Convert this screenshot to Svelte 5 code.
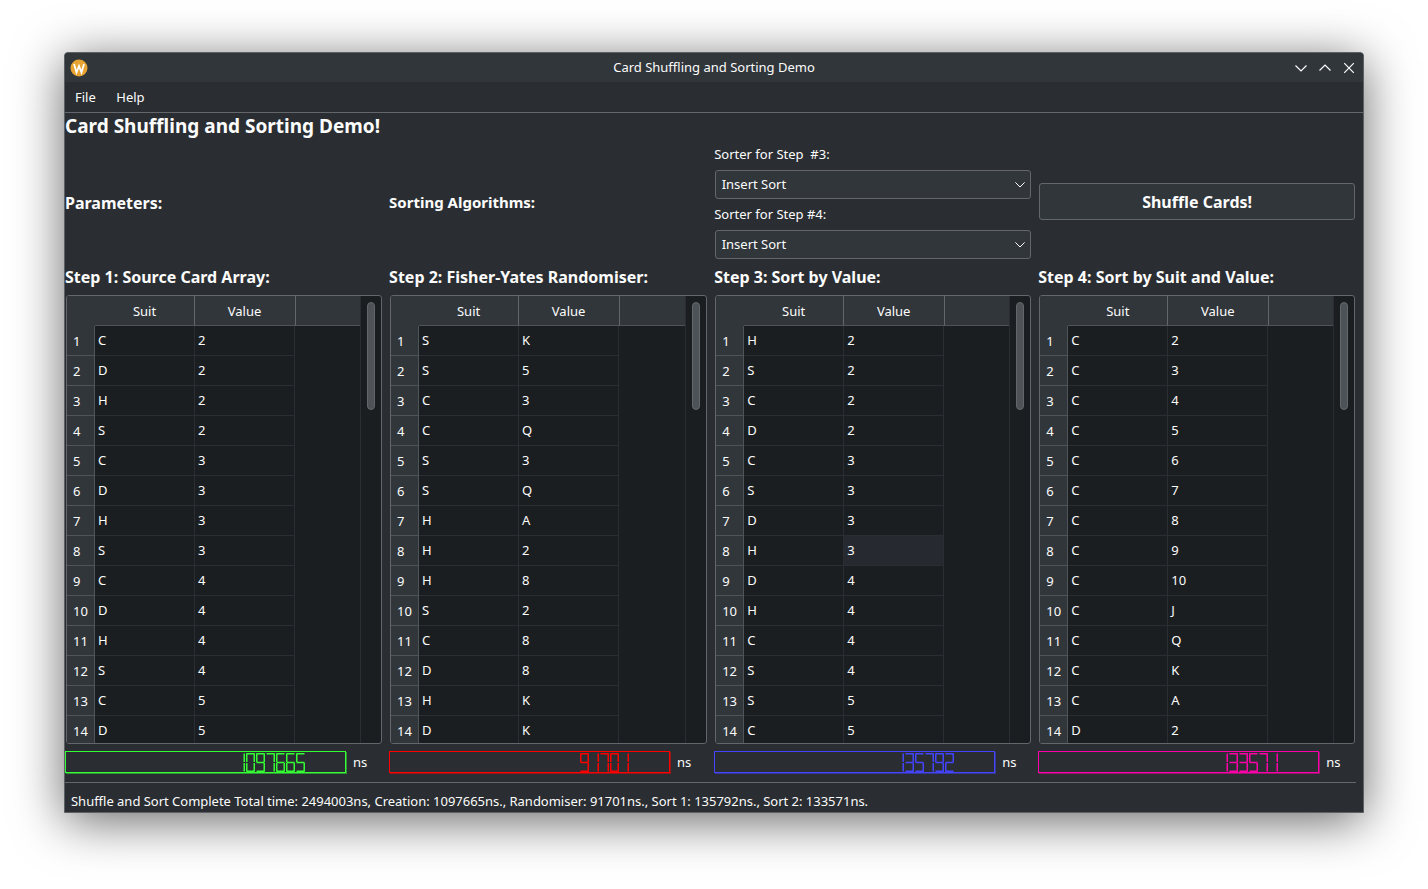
<script>
  const seg = { 0:'abcdef',1:'bc',2:'abged',3:'abgcd',4:'fgbc',5:'afgcd',6:'afgedc',7:'abc',8:'abcdefg',9:'abcdfg' };
  const W = 9, H = 19, T = 1.5, P = 10;
  const rects = {
    a:[0.5,0,W-1,T], g:[0.5,(H-T)/2,W-1,T], d:[0.5,H-T,W-1,T],
    f:[0,0.5,T,H/2-1], e:[0,H/2+0.5,T,H/2-1],
    b:[W-T,0.5,T,H/2-1], c:[W-T,H/2+0.5,T,H/2-1]
  };
  const rows = (s, v) => s.split(' ').map((x, i) => [x, v.split(' ')[i]]);
  const tables = [
    { title:'Step 1: Source Card Array:', rows: rows('C D H S C D H S C D H S C D','2 2 2 2 3 3 3 3 4 4 4 4 5 5'), lcd:'1097665', cls:'green', hover:-1 },
    { title:'Step 2: Fisher-Yates Randomiser:', rows: rows('S S C C S S H H H S C D H D','K 5 3 Q 3 Q A 2 8 2 8 8 K K'), lcd:'91701', cls:'red', hover:-1 },
    { title:'Step 3: Sort by Value:', rows: rows('H S C D C S D H D H C S S C','2 2 2 2 3 3 3 3 4 4 4 4 5 5'), lcd:'135792', cls:'blue', hover:7 },
    { title:'Step 4: Sort by Suit and Value:', rows: rows('C C C C C C C C C C C C C D','2 3 4 5 6 7 8 9 10 J Q K A 2'), lcd:'133571', cls:'pink', hover:-1 }
  ];
</script>

<div class="desktop">
  <div class="window">
    <header class="titlebar">
      <svg class="logo" viewBox="0 0 18 18" width="18" height="18">
        <circle cx="9" cy="9" r="8.5" fill="#e8a433"/>
        <polyline points="4,5 6.5,13.5 9,7 11.5,13.5 14,5" fill="none" stroke="#fff" stroke-width="1.8"/>
      </svg>
      <span class="wintitle">Card Shuffling and Sorting Demo</span>
      <div class="winbtns">
        <svg viewBox="0 0 12 12" width="12" height="12"><polyline points="0.5,3.5 6,9 11.5,3.5" /></svg>
        <svg viewBox="0 0 12 12" width="12" height="12"><polyline points="0.5,8.5 6,3 11.5,8.5" /></svg>
        <svg viewBox="0 0 12 12" width="12" height="12"><path d="M1.2 1.2 L10.8 10.8 M10.8 1.2 L1.2 10.8" /></svg>
      </div>
    </header>
    <nav class="menubar"><span>File</span><span>Help</span></nav>
    <main class="content">
      <h1>Card Shuffling and Sorting Demo!</h1>
      <section class="params">
        <h2>Parameters:</h2>
        <h2 class="small">Sorting Algorithms:</h2>
        <div class="sorters">
          <label for="s3">Sorter for Step &nbsp;#3:</label>
          <div class="combo" id="s3">Insert Sort<svg viewBox="0 0 10 5.5" width="10" height="5.5"><polyline points="0.4,0.4 5,5 9.6,0.4"/></svg></div>
          <label for="s4">Sorter for Step #4:</label>
          <div class="combo" id="s4">Insert Sort<svg viewBox="0 0 10 5.5" width="10" height="5.5"><polyline points="0.4,0.4 5,5 9.6,0.4"/></svg></div>
        </div>
        <button class="shuffle">Shuffle Cards!</button>
      </section>
      <section class="steps">
        {#each tables as t}
          <div class="step">
            <h2 class="steptitle">{t.title}</h2>
            <div class="frame">
              <div class="tablearea">
                <div class="thead">
                  <span class="corner"></span><span class="th">Suit</span><span class="th value">Value</span><span class="threst"></span>
                </div>
                <div class="tbody">
                  {#each t.rows as r, i}
                    <div class="tr">
                      <span class="rh">{i + 1}</span>
                      <span class="td">{r[0]}</span>
                      <span class="td" class:hover={t.hover === i}>{r[1]}</span>
                    </div>
                  {/each}
                </div>
              </div>
              <div class="scroll"><div class="thumb"></div></div>
            </div>
            <div class="lcdrow">
              <div class="lcd {t.cls}" role="img" aria-label={t.lcd}>
                <svg class="digits" width={t.lcd.length * P} height={H} viewBox="0 0 {t.lcd.length * P} {H}">
                  <title>{t.lcd}</title>
                  {#each t.lcd.split('') as d, i}
                    {#each seg[d].split('') as s}
                      <rect x={i * P + 1 + rects[s][0]} y={rects[s][1]} width={rects[s][2]} height={rects[s][3]} />
                    {/each}
                  {/each}
                </svg>
              </div>
              <span class="ns">ns</span>
            </div>
          </div>
        {/each}
      </section>
      <footer class="status">Shuffle and Sort Complete Total time: 2494003ns, Creation: 1097665ns., Randomiser: 91701ns., Sort 1: 135792ns., Sort 2: 133571ns.</footer>
    </main>
  </div>
</div>

<style>
  :global(body) { margin: 0; background: #fff; }
  .desktop { width: 1428px; height: 889px; box-sizing: border-box; padding: 52px 64px 0 64px; overflow: hidden; font-family: "Noto Sans", sans-serif; font-size: 13px; color: #fcfcfc; }
  .window { height: 761px; box-sizing: border-box; border: 1px solid #5c6165; border-radius: 4px 4px 0 0; background: #2a2e32; box-shadow: 0 8px 50px rgba(0,0,0,.6); display: flex; flex-direction: column; overflow: hidden; }
  .titlebar { height: 29px; flex: none; background: #31363b; display: flex; align-items: center; position: relative; padding: 0 8px 0 5px; justify-content: space-between; }
  .wintitle { position: absolute; left: 0; right: 0; text-align: center; font-size: 13px; line-height: 29px; }
  .logo { position: relative; }
  .winbtns { display: flex; gap: 12px; position: relative; }
  .winbtns svg { fill: none; stroke: #fcfcfc; stroke-width: 1.2; display: block; }
  .menubar { height: 31px; flex: none; box-sizing: border-box; display: flex; align-items: center; gap: 20.5px; padding-left: 10px; border-bottom: 1px solid #63676b; }
  .content { flex: 1; min-height: 0; display: flex; flex-direction: column; padding-right: 7px; }
  h1 { margin: 0; font-size: 19px; line-height: 26px; font-weight: 700; }
  h2 { margin: 0; font-size: 16px; line-height: 20px; font-weight: 700; }
  h2.small { font-size: 15px; margin-bottom: 1px; }
  .params { display: grid; grid-template-columns: 318fr 319fr 318fr 318fr; column-gap: 6.33px; align-items: center; height: 127px; flex: none; }
  .sorters { display: flex; flex-direction: column; margin-bottom: 1px; }
  .sorters label { line-height: 18px; padding-bottom: 7px; }
  .sorters .combo + label { padding-top: 6px; padding-bottom: 7px; }
  .combo { height: 29px; box-sizing: border-box; margin: 0 1px; border: 1px solid #63676b; border-radius: 3px; background: #31363b; display: flex; align-items: center; justify-content: space-between; padding: 0 5px 1px 5.5px; }
  .combo svg { fill: none; stroke: #fcfcfc; stroke-width: 1; margin-top: 1px; }
  .shuffle { height: 37px; margin: 0 1px 2px; border: 1px solid #63676b; border-radius: 3px; background: #31363b; color: #fcfcfc; font: 700 16px "Noto Sans", sans-serif; padding: 0; }
  .steps { display: grid; grid-template-columns: 318fr 319fr 318fr 318fr; column-gap: 6.33px; flex: none; }
  .step { display: flex; flex-direction: column; min-width: 0; }
  .steptitle { line-height: 22px; height: 29px; }
  .frame { height: 449px; box-sizing: border-box; margin: 0 1px; border: 1px solid #63676b; border-radius: 3px; display: flex; overflow: hidden; background: #1b1e20; }
  .tablearea { flex: 1; min-width: 0; display: flex; flex-direction: column; overflow: hidden; }
  .thead { height: 30px; flex: none; display: flex; background: #31363b; }
  .corner { width: 28px; flex: none; }
  .th { width: 100px; flex: none; box-sizing: border-box; text-align: center; line-height: 31px; border-right: 1px solid #63676b; border-bottom: 1px solid #4f5458; }
  .th.value { width: 101px; padding-right: 1px; }
  .threst { flex: 1; border-bottom: 1px solid #4f5458; }
  .tbody { flex: 1; min-height: 0; overflow: hidden; }
  .tr { display: flex; height: 30px; box-sizing: border-box; }
  .rh { width: 28px; flex: none; box-sizing: border-box; background: #31363b; border-bottom: 1px solid #4f5458; border-right: 1px solid #4f5458; padding-left: 6px; line-height: 31px; }
  .td { width: 100px; flex: none; box-sizing: border-box; padding-left: 3px; line-height: 28px; border-right: 1px solid #2a2e32; border-bottom: 1px solid #2a2e32; }
  .hover { background: #26292f; }
  .scroll { width: 21px; flex: none; box-sizing: border-box; border-left: 1px solid #2a2e32; padding: 6px 0 0 6px; }
  .thumb { width: 8px; height: 108px; box-sizing: border-box; background: #4d5357; border: 1px solid #63676b; border-radius: 4px; }
  .lcdrow { display: flex; align-items: center; height: 22px; margin-top: 7px; flex: none; }
  .lcd { width: 281px; height: 22px; flex: none; box-sizing: border-box; border: 1px solid currentColor; box-shadow: 1px 1px 0 color-mix(in srgb, currentColor 50%, transparent); padding: 1px 40px 0 0; display: flex; justify-content: flex-end; }
  .digits { display: block; fill: currentColor; }
  .green { color: #33ff33; }
  .red { color: #ff0000; }
  .blue { color: #4444ff; }
  .pink { color: #ff00aa; }
  .ns { margin-left: 7px; }
  .status { margin-top: 9px; padding: 8px 0 0 6px; border-top: 1px solid #63676b; line-height: 20px; letter-spacing: -0.015px; }
</style>
